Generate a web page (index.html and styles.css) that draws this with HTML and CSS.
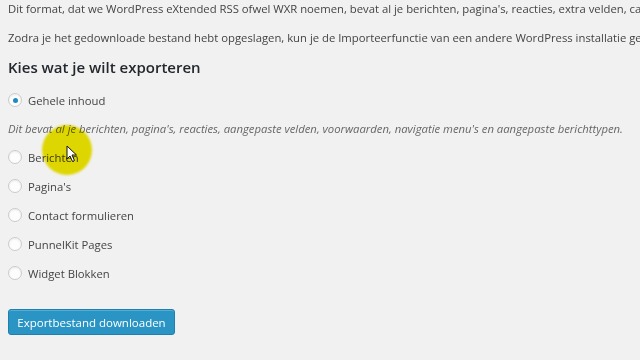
FILE: index.html
```html
<!DOCTYPE html>
<html lang="nl">
<head>
  <meta charset="UTF-8" />
  <title>Exporteren</title>
  <link rel="stylesheet" href="styles.css">
</head>
<body>
  <div class="wrap">
    <p class="intro">Dit format, dat we WordPress eXtended RSS ofwel WXR noemen, bevat al je berichten, pagina's, reacties, extra velden, categorieën en tags.</p>
    <p class="intro">Zodra je het gedownloade bestand hebt opgeslagen, kun je de Importeerfunctie van een andere WordPress installatie gebruiken om de inhoud van deze site te importeren.</p>

    <h2>Kies wat je wilt exporteren</h2>

    <form class="export">
      <label class="choice"><span class="radio checked"></span>Gehele inhoud</label>
      <p class="desc">Dit bevat al je berichten, pagina's, reacties, aangepaste velden, voorwaarden, navigatie menu's en aangepaste berichttypen.</p>
      <label class="choice"><span class="radio"></span>Berichten</label>
      <label class="choice"><span class="radio"></span>Pagina's</label>
      <label class="choice"><span class="radio"></span>Contact formulieren</label>
      <label class="choice"><span class="radio"></span>PunnelKit Pages</label>
      <label class="choice"><span class="radio"></span>Widget Blokken</label>
      <button type="button" class="primary">Exportbestand downloaden</button>
    </form>
  </div>

  <div class="spot"></div>
  <svg class="cursor" width="12" height="18" viewBox="0 0 12 18">
    <path d="M1 1 L1 14 L4 11 L6.5 16.5 L8.5 15.5 L6 10 L10.5 10 Z" fill="#fff" stroke="#111" stroke-width="1" stroke-linejoin="round"/>
  </svg>
</body>
</html>
```

FILE: styles.css
```css
* {
  box-sizing: border-box;
}

html, body {
  margin: 0;
  padding: 0;
  background-color: #f1f1f1;
  height: 100%;
  overflow: hidden;
}

body {
  font-family: 'Open Sans', sans-serif;
  font-size: 11.3px;
  color: #444;
  position: relative;
}

.wrap {
  padding: 0 8px;
  overflow: hidden;
}

.intro {
  margin: 0;
  white-space: nowrap;
  line-height: 18px;
}

.intro + .intro {
  margin-top: 11px;
}

h2 {
  margin: 9px 0 0;
  font-size: 15px;
  font-weight: 600;
  color: #23282d;
  line-height: 22px;
}

.export {
  display: flex;
  flex-direction: column;
  align-items: flex-start;
  margin-top: 12px;
}

.choice {
  display: flex;
  align-items: center;
  height: 20px;
  margin-bottom: 9px;
}

.radio {
  width: 14px;
  height: 14px;
  border-radius: 50%;
  border: 1px solid #cbcbcb;
  background: #fdfdfd;
  box-shadow: inset 0 1px 2px rgba(0, 0, 0, 0.08);
  margin-right: 6px;
  display: flex;
  align-items: center;
  justify-content: center;
}

.radio.checked::after {
  content: "";
  width: 5px;
  height: 5px;
  border-radius: 50%;
  background: #1e8cbe;
}

.desc {
  margin: 1px 0 9px;
  font-style: italic;
  color: #666;
  white-space: nowrap;
  line-height: 18px;
}

.primary {
  margin-top: 17px;
  font-family: 'Open Sans', sans-serif;
  font-size: 11.5px;
  color: #fff;
  background: #2a95c5;
  border: 1px solid #1f7fb0;
  border-radius: 3px;
  height: 26px;
  width: 167px;
  padding: 0;
  box-shadow: inset 0 1px 0 rgba(120, 200, 230, 0.5);
}

.spot {
  position: absolute;
  left: 42px;
  top: 125px;
  width: 50px;
  height: 50px;
  border-radius: 50%;
  background: #ebe300;
  mix-blend-mode: multiply;
  filter: blur(1px);
}

.cursor {
  position: absolute;
  left: 66px;
  top: 145px;
}
```
